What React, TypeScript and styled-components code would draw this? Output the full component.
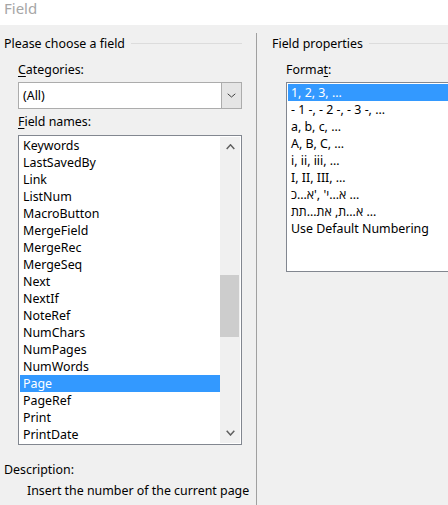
import React from "react";
import styled, { createGlobalStyle } from "styled-components";

const GlobalStyle = createGlobalStyle`
  html, body { margin: 0; padding: 0; }
  body {
    background: #f0f0f0;
    font-family: "Noto Sans", "Open Sans", sans-serif;
    font-size: 12.4px;
    color: #000;
    overflow: hidden;
  }
`;

const Window = styled.div`
  width: 448px;
  height: 505px;
  display: flex;
  flex-direction: column;
  overflow: hidden;
`;

const TitleBar = styled.div`
  height: 25px;
  background: #ffffff;
  color: #a6a6a6;
  font-size: 15px;
  line-height: 16px;
  padding-left: 4px;
  box-sizing: border-box;
`;

const Body = styled.div`
  flex: 1;
  display: flex;
  padding-top: 8px;
  min-height: 0;
`;

const LeftPane = styled.div`
  width: 238px;
  margin-left: 4px;
  padding-top: 3px;
  display: flex;
  flex-direction: column;
`;

const Separator = styled.div`
  width: 1px;
  background: #a0a0a0;
  margin-left: 14px;
`;

const RightPane = styled.div`
  margin-left: 15px;
  padding-top: 3px;
  flex: 1;
  display: flex;
  flex-direction: column;
  min-width: 0;
`;

const GroupHeader = styled.div`
  display: flex;
  align-items: center;
  line-height: 16px;
  height: 16px;
  white-space: nowrap;
`;

const Rule = styled.div`
  flex: 1;
  height: 1px;
  background: #dcdcdc;
  margin-left: 6px;
  margin-top: -1px;
`;

const Indented = styled.div<{ $indent: number }>`
  margin-left: ${(p) => p.$indent}px;
  display: flex;
  flex-direction: column;
`;

const Label = styled.div<{ $top: number; $bottom: number }>`
  line-height: 16px;
  height: 16px;
  margin-top: ${(p) => p.$top}px;
  margin-bottom: ${(p) => p.$bottom}px;
  white-space: nowrap;
  u { text-decoration-thickness: 1px; text-underline-offset: 2px; }
`;

const Combo = styled.div`
  display: flex;
  height: 27px;
  width: 224px;
  box-sizing: border-box;
`;

const ComboText = styled.div`
  flex: 1;
  background: #fff;
  border: 1px solid #acacac;
  border-right: none;
  line-height: 25px;
  padding-left: 4px;
`;

const ComboButton = styled.div`
  width: 21px;
  background: #e5e5e5;
  border: 1px solid #acacac;
  display: flex;
  align-items: center;
  justify-content: center;
  box-sizing: border-box;
`;

const ListBox = styled.div<{ $width: number; $height: number }>`
  width: ${(p) => p.$width}px;
  height: ${(p) => p.$height}px;
  box-sizing: border-box;
  border: 1px solid #828790;
  background: #fff;
  display: flex;
  flex-shrink: 0;
`;

const Items = styled.div`
  flex: 1;
  padding: 1px 0 1px 1px;
  overflow: hidden;
`;

const Item = styled.div<{ $selected?: boolean }>`
  height: 17px;
  line-height: 17px;
  padding-left: 3px;
  white-space: nowrap;
  background: ${(p) => (p.$selected ? "#3399ff" : "transparent")};
  color: ${(p) => (p.$selected ? "#fff" : "#000")};
`;

const RtlItem = styled.span`
  unicode-bidi: bidi-override;
  direction: ltr;
`;

const ScrollBar = styled.div`
  width: 20px;
  margin: 1px 1px 1px 0;
  background: #f0f0f0;
  display: flex;
  flex-direction: column;
`;

const ScrollButton = styled.div`
  height: 20px;
  display: flex;
  align-items: center;
  justify-content: center;
`;

const Track = styled.div<{ $offset: number }>`
  flex: 1;
  padding-top: ${(p) => p.$offset}px;
`;

const Thumb = styled.div<{ $size: number }>`
  height: ${(p) => p.$size}px;
  width: 19px;
  background: #cdcdcd;
`;

const Description = styled.div`
  margin-top: 17px;
  line-height: 16px;
`;

const DescriptionText = styled.div`
  margin-top: 5px;
  padding-left: 23px;
  line-height: 16px;
  white-space: nowrap;
`;

const Chevron = ({ up, w = 9, h = 5, color = "#606060", sw = 1.5 }: { up?: boolean; w?: number; h?: number; color?: string; sw?: number }) => (
  <svg width={w} height={h + 1} viewBox={`0 0 ${w} ${h + 1}`} fill="none">
    <polyline
      points={up ? `0.7,${h} ${w / 2},0.8 ${w - 0.7},${h}` : `0.7,0.8 ${w / 2},${h} ${w - 0.7},0.8`}
      stroke={color}
      strokeWidth={sw}
    />
  </svg>
);

const fieldNames = [
  "Keywords",
  "LastSavedBy",
  "Link",
  "ListNum",
  "MacroButton",
  "MergeField",
  "MergeRec",
  "MergeSeq",
  "Next",
  "NextIf",
  "NoteRef",
  "NumChars",
  "NumPages",
  "NumWords",
  "Page",
  "PageRef",
  "Print",
  "PrintDate",
];

const formats = [
  { text: "1, 2, 3, …" },
  { text: "- 1 -, - 2 -, - 3 -, …" },
  { text: "a, b, c, …" },
  { text: "A, B, C, …" },
  { text: "i, ii, iii, …" },
  { text: "I, II, III, …" },
  { text: "כ…א', 'י…א …", rtl: true },
  { text: "תת…תא ,ת…א …", rtl: true },
  { text: "Use Default Numbering" },
];

export default function App() {
  return (
    <>
      <GlobalStyle />
      <Window>
        <TitleBar>Field</TitleBar>
        <Body>
          <LeftPane>
            <GroupHeader>
              Please choose a field
              <Rule />
            </GroupHeader>
            <Indented $indent={14}>
              <Label $top={10} $bottom={4}>
                <u>C</u>ategories:
              </Label>
              <Combo>
                <ComboText>(All)</ComboText>
                <ComboButton>
                  <Chevron w={9} h={4} color="#404040" sw={1} />
                </ComboButton>
              </Combo>
              <Label $top={5} $bottom={5}>
                <u>F</u>ield names:
              </Label>
              <ListBox $width={224} $height={310}>
                <Items>
                  {fieldNames.map((n) => (
                    <Item key={n} $selected={n === "Page"}>
                      {n}
                    </Item>
                  ))}
                </Items>
                <ScrollBar>
                  <ScrollButton>
                    <Chevron up />
                  </ScrollButton>
                  <Track $offset={118}>
                    <Thumb $size={62} />
                  </Track>
                  <ScrollButton>
                    <Chevron />
                  </ScrollButton>
                </ScrollBar>
              </ListBox>
            </Indented>
            <Description>Description:</Description>
            <DescriptionText>Insert the number of the current page</DescriptionText>
          </LeftPane>
          <Separator />
          <RightPane>
            <GroupHeader>
              Field properties
              <Rule />
            </GroupHeader>
            <Indented $indent={14}>
              <Label $top={10} $bottom={4}>
                Forma<u>t</u>:
              </Label>
              <ListBox $width={200} $height={190}>
                <Items>
                  {formats.map((f, i) => (
                    <Item key={i} $selected={i === 0}>
                      {f.rtl ? <RtlItem>{f.text}</RtlItem> : f.text}
                    </Item>
                  ))}
                </Items>
              </ListBox>
            </Indented>
          </RightPane>
        </Body>
      </Window>
    </>
  );
}
